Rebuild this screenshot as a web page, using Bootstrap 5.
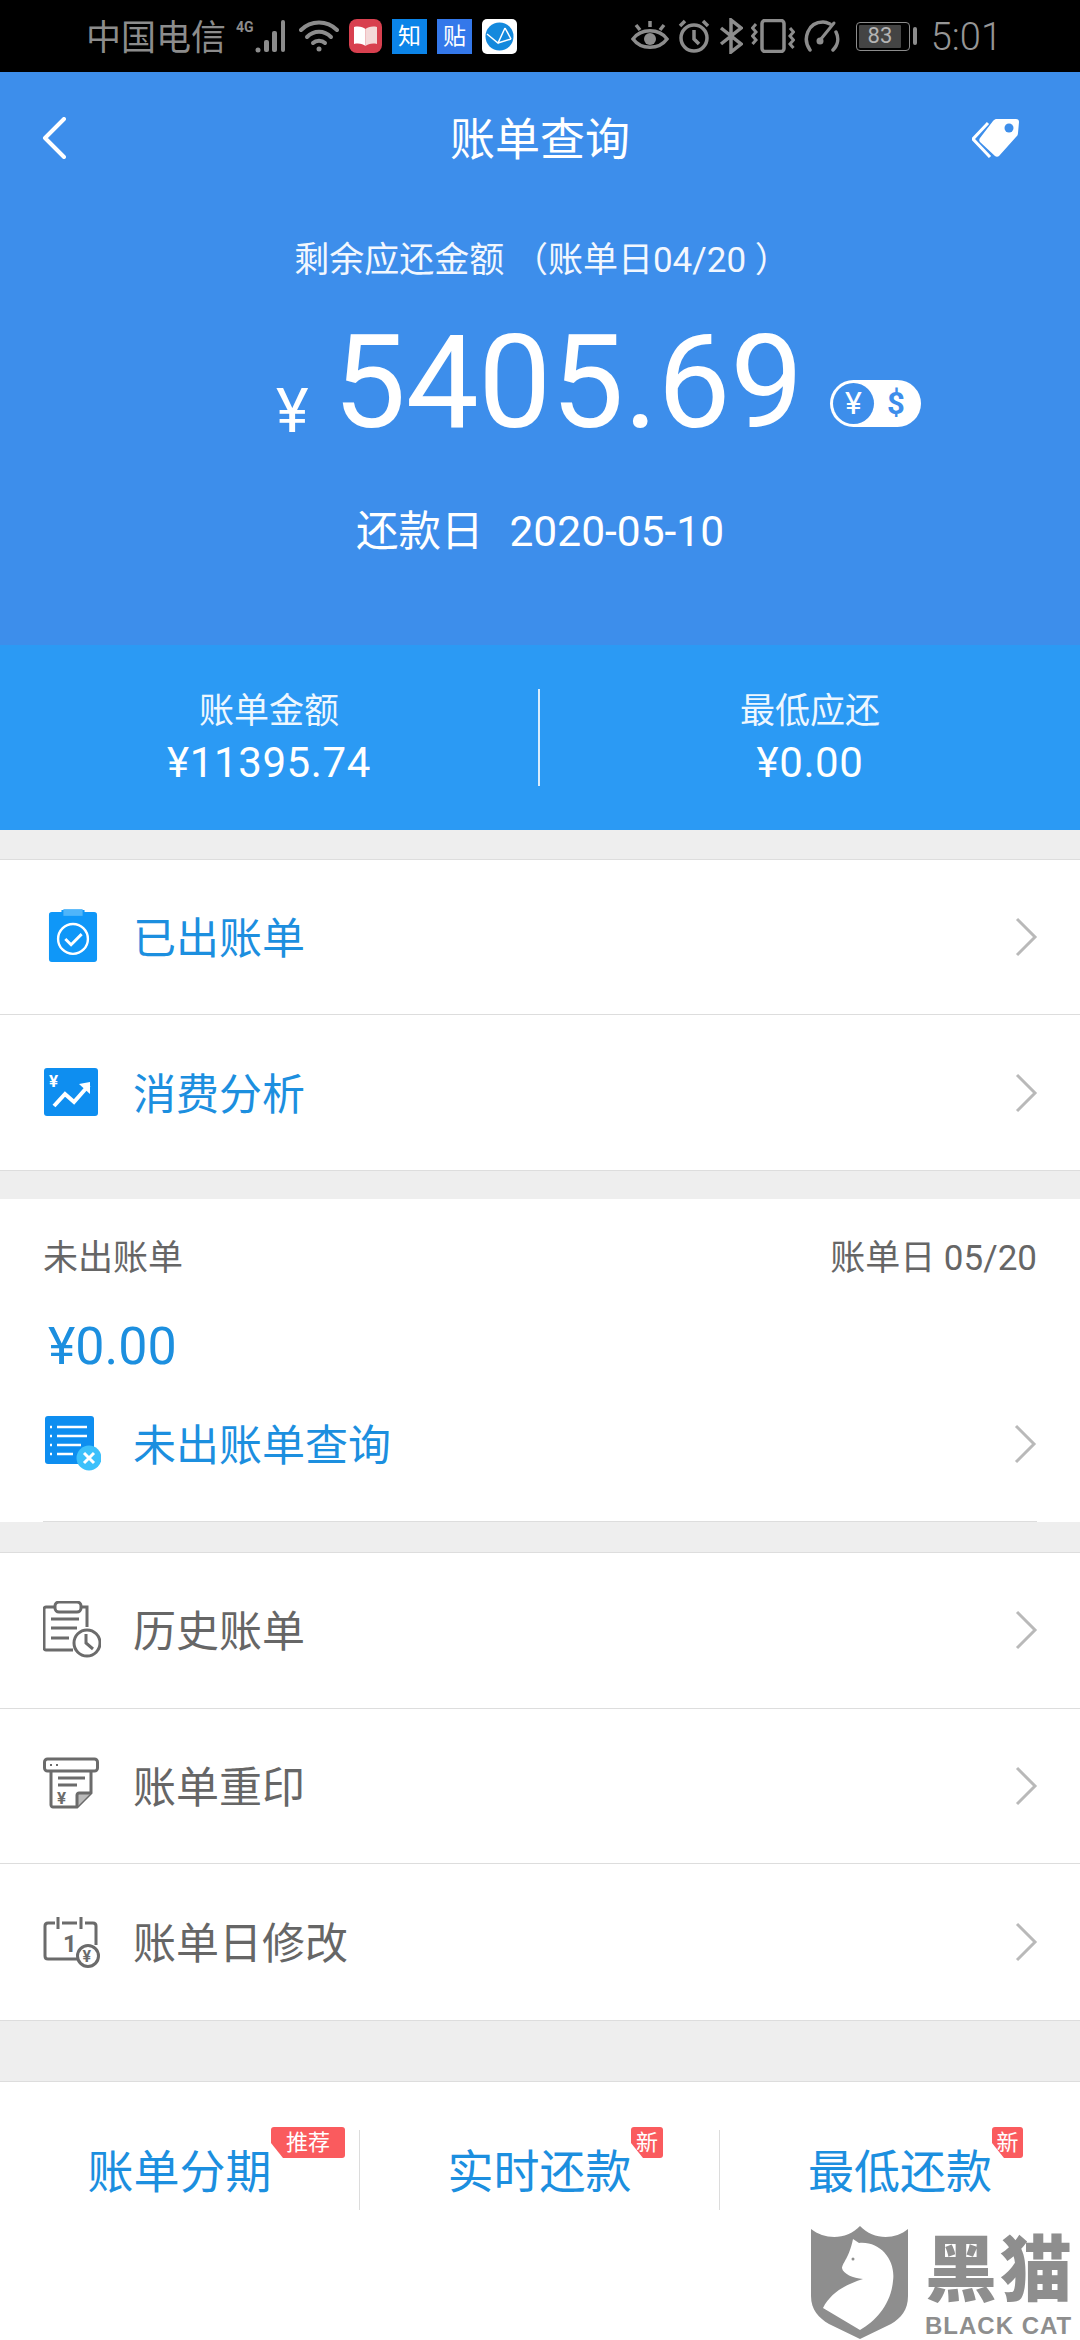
<!DOCTYPE html>
<html lang="zh-CN">
<head>
<meta charset="utf-8">
<title>账单查询</title>
<link href="https://cdn.jsdelivr.net/npm/bootstrap@5.3.0/dist/css/bootstrap.min.css" rel="stylesheet">
<style>
:root{--cn:"Roboto","Noto Sans CJK SC",sans-serif;--blue:#1c8fdf;--line:#dddddd;--gray:#666666;}
html,body{margin:0;background:#eeeeee;}
body{width:1080px;height:2340px;overflow:hidden;font-family:var(--cn);position:relative;}
.sbar{height:72px;background:#000;color:#8c8c8c;padding:0 78px 0 86px;}
.sbar-left{gap:10px;}
.sbar-text{font-size:35px;line-height:1;padding-top:4px;}
.sbar-time{font-size:38px;line-height:1;font-weight:300;color:#969696;margin-left:14px;padding-top:2px;}
.app-tile{width:35px;height:35px;display:flex;align-items:center;justify-content:center;color:#fff;font-size:23px;line-height:1;}
.tile-zhi{background:#0b84e8;}
.tile-tie{background:#3478ea;}
.batt{width:54px;height:29px;border:1.5px solid #8c8c8c;border-radius:4px;padding:2px;}
.batt-fill{background:#444;height:100%;width:88%;border-radius:1px;color:#b4b4b4;font-size:22px;line-height:22px;text-align:center;}
.batt-nub{width:4px;height:18px;background:#8c8c8c;border-radius:2px;margin-left:3px;}
.hero{height:573px;background:#3d8eeb;color:#fff;}
.hero-nav{height:132px;padding:0 60px 0 42px;position:relative;}
.hero-title{font-size:45px;line-height:1;position:absolute;left:0;right:0;text-align:center;top:46px;}
.hero-sub{font-size:35px;line-height:50px;margin-top:32px;text-align:center;color:#f2f7fe;padding-left:4px;}
.hero-amt{height:150px;margin-top:22px;padding-left:276px;}
.amt-cur{font-size:62px;line-height:1;width:57px;}
.amt-num{font-size:130px;line-height:150px;letter-spacing:-.4px;width:497px;}
.amt-switch{width:91px;height:47px;background:#fff;border-radius:24px;color:#3d8eeb;padding:3px;margin-top:40px;}
.switch-on{width:41px;height:41px;border-radius:50%;background:#3d8eeb;color:#fff;font-size:32px;line-height:41px;text-align:center;}
.switch-off{flex:1;text-align:center;font-size:31px;font-weight:700;line-height:41px;}
.hero-date{font-size:42.500px;line-height:50px;margin-top:49px;text-align:center;}
.hero-date span{margin-left:26px;}
.band{height:185px;background:#2b9af4;color:#fff;}
.band-cell{height:97px;text-align:center;}
.band-cell.first{border-right:2px solid #d8ecfd;}
.band-label{font-size:35px;line-height:45px;color:#eef7ff;}
.band-val{font-size:42px;line-height:52px;letter-spacing:.6px;margin-top:3px;}
.sect{border-top:1px solid var(--line);border-bottom:1px solid var(--line);background:#fff;}
.gap-a{height:29px;}
.gap-b{height:28px;}
.gap-d{height:30px;}
.gap-c{height:60px;}
.rowitem{height:155px;border:0;border-bottom:1px solid var(--line);padding:0 42px 0 0;background:#fff;border-radius:0!important;}
.rowitem-wide{height:155.670px;}
.rowitem:last-child{border-bottom:0;}
.row-ico{width:133px;display:flex;justify-content:flex-start;padding-left:43px;flex:none;}
.row-ico-in{padding-left:48px;}
.row-label{font-size:43px;line-height:1;flex:1;padding-top:5px;}
.lb-blue{color:var(--blue);}
.lb-gray{color:var(--gray);}
.unbilled{height:323px;background:#fff;padding:40px 43px 0;}
.unb-head{font-size:35px;line-height:40px;color:#666;}
.unb-amt{font-size:52px;line-height:60px;color:var(--blue);padding-left:5px;margin-top:38px;}
.unb-row{height:145px;border-bottom:1px solid var(--line);padding-bottom:11px;}
.unb-row .row-ico{width:90px;padding-left:0;}
.foot{height:259px;background:#fff;border-top:1px solid var(--line);padding-top:48px;}
.foot-cell{height:80px;position:relative;display:flex;align-items:center;justify-content:center;color:var(--blue);font-size:46px;padding-top:6px;}
.foot-cell.sep{border-right:1px solid #dcdcdc;}
.tagmark{position:absolute;top:-3px;height:31px;background:#fa5b5e;color:#fff;font-size:22px;line-height:31px;text-align:center;border-radius:3px;clip-path:polygon(0 0,100% 0,100% 100%,12px 100%,0 16px);}
.wm{position:absolute;left:811px;top:2226px;width:269px;height:114px;color:#8e8e8e;}
.wm-name{position:absolute;left:114px;top:2px;font-size:72px;line-height:1;font-weight:900;letter-spacing:3px;white-space:nowrap;font-family:"Noto Sans CJK SC",sans-serif;}
.wm-en{position:absolute;left:114px;top:88px;font-size:24px;line-height:1;font-weight:700;letter-spacing:1px;white-space:nowrap;font-family:"Liberation Sans",sans-serif;}
</style>
</head>
<body>

<div class="sbar d-flex align-items-center justify-content-between">
  <div class="d-flex align-items-center sbar-left">
    <span class="sbar-text">中国电信</span>
    <svg width="53" height="34" viewBox="0 0 53 34" fill="#8c8c8c"><text x="0" y="13" font-size="14" font-weight="700" font-family="Roboto,sans-serif">4G</text><circle cx="22" cy="31" r="2.5"/><rect x="28" y="21" width="5" height="12" rx="2"/><rect x="36" y="12" width="5" height="21" rx="2"/><rect x="45" y="1" width="4" height="32" rx="2"/></svg>
    <svg width="40" height="36" viewBox="0 0 40 36" fill="none" stroke="#8c8c8c" stroke-width="4" stroke-linecap="round"><path d="M2 12C12 2 28 2 38 12"/><path d="M8 19C15 12 25 12 32 19"/><path d="M14 25C17 22 23 22 26 25"/><circle cx="20" cy="31" r="2.5" fill="#8c8c8c" stroke="none"/></svg>
    <svg width="33" height="34" viewBox="0 0 33 34"><rect width="33" height="34" rx="8" fill="#d8404f"/><path d="M5 8C10 7 14 8 16.5 10V27C14 25 10 24 5 25Z" fill="#fff"/><path d="M28 8C23 7 19 8 16.5 10V27C19 25 23 24 28 25Z" fill="#f4d9d9"/></svg>
    <div class="app-tile tile-zhi">知</div>
    <div class="app-tile tile-tie">贴</div>
    <svg width="35" height="35" viewBox="0 0 35 35"><rect width="35" height="35" rx="5" fill="#fff"/><circle cx="17.5" cy="17.5" r="14" fill="#1489dd"/><path d="M5 15L16 24L23 9M16 24L29 20M23 9L29 20" fill="none" stroke="#fff" stroke-width="1.5"/></svg>
  </div>
  <div class="d-flex align-items-center">
    <svg width="38" height="34" viewBox="0 0 38 34" fill="none" stroke="#8c8c8c" stroke-width="3.5"><path d="M2 20C10 9 28 9 36 20C28 31 10 31 2 20Z"/><circle cx="19" cy="20" r="6" fill="#8c8c8c" stroke="none"/><path d="M5 6L9 11M19 2V8M33 6L29 11"/></svg>
    <svg class="ms-2" width="34" height="34" viewBox="0 0 34 34" fill="none" stroke="#8c8c8c" stroke-width="3.5"><circle cx="17" cy="19" r="13"/><path d="M17 11V20L22 25M3 7L8 2M31 7L26 2"/></svg>
    <svg class="ms-2" width="24" height="36" viewBox="0 0 24 36" fill="none" stroke="#8c8c8c" stroke-width="3.5"><path d="M2 10L22 26L12 34V2L22 10L2 26"/></svg>
    <svg class="ms-2" width="44" height="34" viewBox="0 0 44 34" fill="none" stroke="#8c8c8c" stroke-width="3"><rect x="11" y="1.5" width="22" height="31" rx="3" stroke-width="3.5"/><path d="M5 5L1.500 9L5 13L1.500 17L5 21L1.500 25M39 9L42.500 13L39 17L42.500 21L39 25L42.500 29"/></svg>
    <svg class="ms-2" width="37" height="34" viewBox="0 0 37 34" fill="none" stroke="#8c8c8c" stroke-width="3.500" stroke-linecap="round"><path d="M7 31C-1 20 5 3 20 3C23 3 25 4 27 5"/><path d="M33 13C36 19 35 26 30 31"/><path d="M31 4L18 20" stroke-width="3"/><circle cx="17" cy="22" r="3.500" fill="#8c8c8c" stroke="none"/></svg>
    <div class="batt ms-3"><div class="batt-fill">83</div></div>
    <div class="batt-nub"></div>
    <span class="sbar-time">5:01</span>
  </div>
</div>

<div class="hero">
  <div class="hero-nav d-flex align-items-center justify-content-between">
    <svg width="24" height="42" viewBox="0 0 24 42" fill="none" stroke="#fff" stroke-width="4" stroke-linecap="round" stroke-linejoin="round"><path d="M22 2L3 21L22 40"/></svg>
    <div class="hero-title">账单查询</div>
    <svg width="48" height="40" viewBox="0 0 48 40"><path d="M16 5L1 21L18 39" fill="none" stroke="#fff" stroke-width="3"/><path d="M24 1H44C46 1 47 2 47 4L46 15C46 17 45 18 44 19L27 38C26 39 24 39 23 38L8 24C7 23 7 21 8 20L21 3C22 2 23 1 24 1Z" fill="#fff"/><circle cx="37" cy="10" r="4.500" fill="#3d8eeb"/></svg>
  </div>
  <div class="hero-sub">剩余应还金额 （账单日04/20 ）</div>
  <div class="hero-amt d-flex align-items-center">
    <div class="amt-cur align-self-end pb-3">¥</div>
    <div class="amt-num">5405.69</div>
    <div class="amt-switch d-flex"><div class="switch-on">¥</div><div class="switch-off">$</div></div>
  </div>
  <div class="hero-date">还款日<span>2020-05-10</span></div>
</div>

<div class="band row g-0 align-items-center">
  <div class="col-6"><div class="band-cell first"><div class="band-label">账单金额</div><div class="band-val">¥11395.74</div></div></div>
  <div class="col-6"><div class="band-cell"><div class="band-label">最低应还</div><div class="band-val">¥0.00</div></div></div>
</div>

<div class="gap-a"></div>
<div class="sect list-group list-group-flush">
  <div class="rowitem list-group-item d-flex align-items-center">
    <div class="row-ico row-ico-in"><svg width="50" height="58" viewBox="0 0 52 58"><path d="M4 3H14V1H38V3H48C50 3 51 4 51 6V52C51 54 50 55 48 55H4C2 55 1 54 1 52V6C1 4 2 3 4 3Z" fill="#0f97f8"/><rect x="16" y="0" width="20" height="7" fill="#4fb5fa"/><circle cx="26" cy="31" r="15.500" fill="none" stroke="#fff" stroke-width="2.500"/><path d="M18 31L24 37L35 26" fill="none" stroke="#fff" stroke-width="3"/></svg></div>
    <div class="row-label lb-blue">已出账单</div>
    <svg width="24" height="40" viewBox="0 0 24 40" fill="none" stroke="#b9b9b9" stroke-width="3"><path d="M3 2L21 20L3 38"/></svg>
  </div>
  <div class="rowitem list-group-item d-flex align-items-center">
    <div class="row-ico"><svg width="56" height="52" viewBox="0 0 56 52"><rect x="1" y="1" width="54" height="48" rx="3" fill="#0e8ef0"/><text x="6" y="20" font-size="17" font-weight="700" fill="#fff" font-family="Roboto,sans-serif">¥</text><path d="M11 39L22 27L31 35L46 18" fill="none" stroke="#fff" stroke-width="4"/><path d="M36 17L47 15L47 27Z" fill="#fff"/></svg></div>
    <div class="row-label lb-blue">消费分析</div>
    <svg width="24" height="40" viewBox="0 0 24 40" fill="none" stroke="#b9b9b9" stroke-width="3"><path d="M3 2L21 20L3 38"/></svg>
  </div>
</div>
<div class="gap-b"></div>

<div class="unbilled">
  <div class="unb-head d-flex justify-content-between"><span>未出账单</span><span>账单日 05/20</span></div>
  <div class="unb-amt">¥0.00</div>
  <div class="unb-row d-flex align-items-center">
    <div class="row-ico"><svg width="58" height="58" viewBox="0 0 58 58"><rect x="2" y="1" width="49" height="48" rx="3" fill="#0e8ef0"/><g fill="none" stroke="#fff" stroke-width="2.500"><path d="M14 12H44M14 21H44M14 30H38M14 39H30"/><path d="M7 12H9M7 21H9M7 30H9M7 39H9"/></g><circle cx="46" cy="43" r="12.500" fill="#3cc0fb"/><path d="M41 38L51 48M51 38L41 48" stroke="#fff" stroke-width="3"/></svg></div>
    <div class="row-label lb-blue">未出账单查询</div>
    <svg width="24" height="40" viewBox="0 0 24 40" fill="none" stroke="#b9b9b9" stroke-width="3"><path d="M3 2L21 20L3 38"/></svg>
  </div>
</div>
<div class="gap-d"></div>

<div class="sect list-group list-group-flush">
  <div class="rowitem rowitem-wide list-group-item d-flex align-items-center">
    <div class="row-ico"><svg width="58" height="58" viewBox="0 0 58 58" fill="none" stroke="#6b6b6b" stroke-width="3"><path d="M38 6H44V26M12 6H3C2 6 1 7 1 8V47C1 48 2 49 3 49H30"/><rect x="12" y="1" width="26" height="10" rx="4"/><path d="M8 18H36M8 27H34M8 37H26"/><circle cx="44" cy="42" r="13"/><path d="M43 33V42L50 48"/></svg></div>
    <div class="row-label lb-gray">历史账单</div>
    <svg width="24" height="40" viewBox="0 0 24 40" fill="none" stroke="#b9b9b9" stroke-width="3"><path d="M3 2L21 20L3 38"/></svg>
  </div>
  <div class="rowitem rowitem-wide list-group-item d-flex align-items-center">
    <div class="row-ico"><svg width="56" height="58" viewBox="0 0 56 58" fill="none" stroke="#6b6b6b" stroke-width="3"><rect x="1.500" y="2" width="53" height="12" rx="3"/><path d="M8 14V48C8 49 9 50 10 50H34L48 36V14"/><path d="M34 50V38C34 37 35 36 36 36H48" fill="#bbb"/><path d="M15 21H42M15 28H34"/><text x="14" y="47" font-size="17" font-weight="700" fill="#6b6b6b" stroke="none" font-family="Roboto,sans-serif">¥</text><path d="M7 8H9M13 8H15" stroke-width="2"/></svg></div>
    <div class="row-label lb-gray">账单重印</div>
    <svg width="24" height="40" viewBox="0 0 24 40" fill="none" stroke="#b9b9b9" stroke-width="3"><path d="M3 2L21 20L3 38"/></svg>
  </div>
  <div class="rowitem rowitem-wide list-group-item d-flex align-items-center">
    <div class="row-ico"><svg width="58" height="54" viewBox="0 0 58 54" fill="none" stroke="#6b6b6b" stroke-width="3"><path d="M34 44H5C3 44 2 43 2 41V11C2 9 3 8 5 8H12M19 8H34M42 8H50C52 8 53 9 53 11V30"/><path d="M15 2V14M38 2V14"/><text x="20" y="37" font-size="24" font-weight="700" fill="#6b6b6b" stroke="none" font-family="Roboto,sans-serif">1</text><circle cx="45" cy="41" r="10.500"/><text x="39.500" y="47" font-size="16" font-weight="700" fill="#6b6b6b" stroke="none" font-family="Roboto,sans-serif">¥</text></svg></div>
    <div class="row-label lb-gray">账单日修改</div>
    <svg width="24" height="40" viewBox="0 0 24 40" fill="none" stroke="#b9b9b9" stroke-width="3"><path d="M3 2L21 20L3 38"/></svg>
  </div>
</div>
<div class="gap-c"></div>

<div class="foot row g-0 align-items-start">
  <div class="col-4"><div class="foot-cell sep">账单分期<span class="tagmark" style="left:271px;width:74px">推荐</span></div></div>
  <div class="col-4"><div class="foot-cell sep">实时还款<span class="tagmark" style="left:271px;width:32px">新</span></div></div>
  <div class="col-4"><div class="foot-cell">最低还款<span class="tagmark" style="left:272px;width:31px">新</span></div></div>
</div>

<div class="wm">
  <svg width="98" height="114" viewBox="0 0 98 114"><path d="M0 3C14 14 36 14 49 0C62 14 84 14 97 3V70C97 84 90 92 80 98L49 113L18 98C8 92 0 84 0 70Z" fill="#8e8e8e"/><path d="M42 13L48 17C70 15 85 35 82 55C80 78 65 95 49 104L12 82C20 66 36 58 52 53C42 52 32 48 31 42C32 36 38 32 42 13Z" fill="#fff"/><circle cx="42" cy="33" r="1.500" fill="#8e8e8e"/></svg>
  <div class="wm-name">黑猫</div>
  <div class="wm-en">BLACK CAT</div>
</div>

</body>
</html>
